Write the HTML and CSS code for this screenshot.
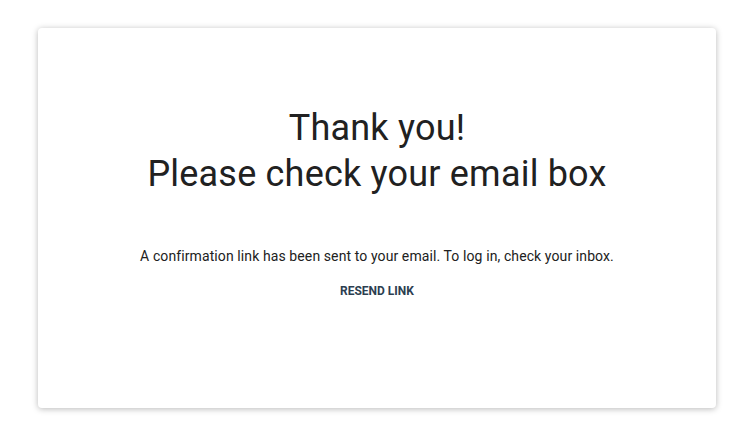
FILE: index.html
```html
<!DOCTYPE html>
<html lang="en">
<head>
<meta charset="utf-8">
<title>Thank you</title>
<link rel="stylesheet" href="styles.css">
</head>
<body>
<main class="page">
  <section class="card">
    <h1 class="title">Thank you!<br>Please check your email box</h1>
    <p class="message">A confirmation link has been sent to your email. To log in, check your inbox.</p>
    <button class="resend" type="button">RESEND LINK</button>
  </section>
</main>
</body>
</html>
```

FILE: styles.css
```css
html, body {
  margin: 0;
  padding: 0;
  background: #ffffff;
}

body {
  font-family: Roboto, "Liberation Sans", Arial, sans-serif;
  color: rgba(0, 0, 0, 0.87);
}

.page {
  padding: 28px 38px 37px;
}

.card {
  height: 380px;
  box-sizing: border-box;
  background: #fff;
  border-radius: 4px;
  box-shadow: 0 1px 6px rgba(0, 0, 0, 0.28);
  display: flex;
  flex-direction: column;
  align-items: center;
  padding-top: 77px;
  text-align: center;
}

.title {
  margin: 0;
  font-size: 36px;
  font-weight: 400;
  line-height: 46px;
  letter-spacing: 0.2px;
  color: #212121;
}

.message {
  margin: 49px 0 0;
  font-size: 14px;
  line-height: 20px;
  letter-spacing: 0.1px;
  color: #212121;
}

.resend {
  margin-top: 13px;
  border: 0;
  background: transparent;
  padding: 4px 8px;
  font-family: inherit;
  font-size: 12px;
  font-weight: 700;
  line-height: 16px;
  color: #2c3e50;
  cursor: pointer;
}
```
